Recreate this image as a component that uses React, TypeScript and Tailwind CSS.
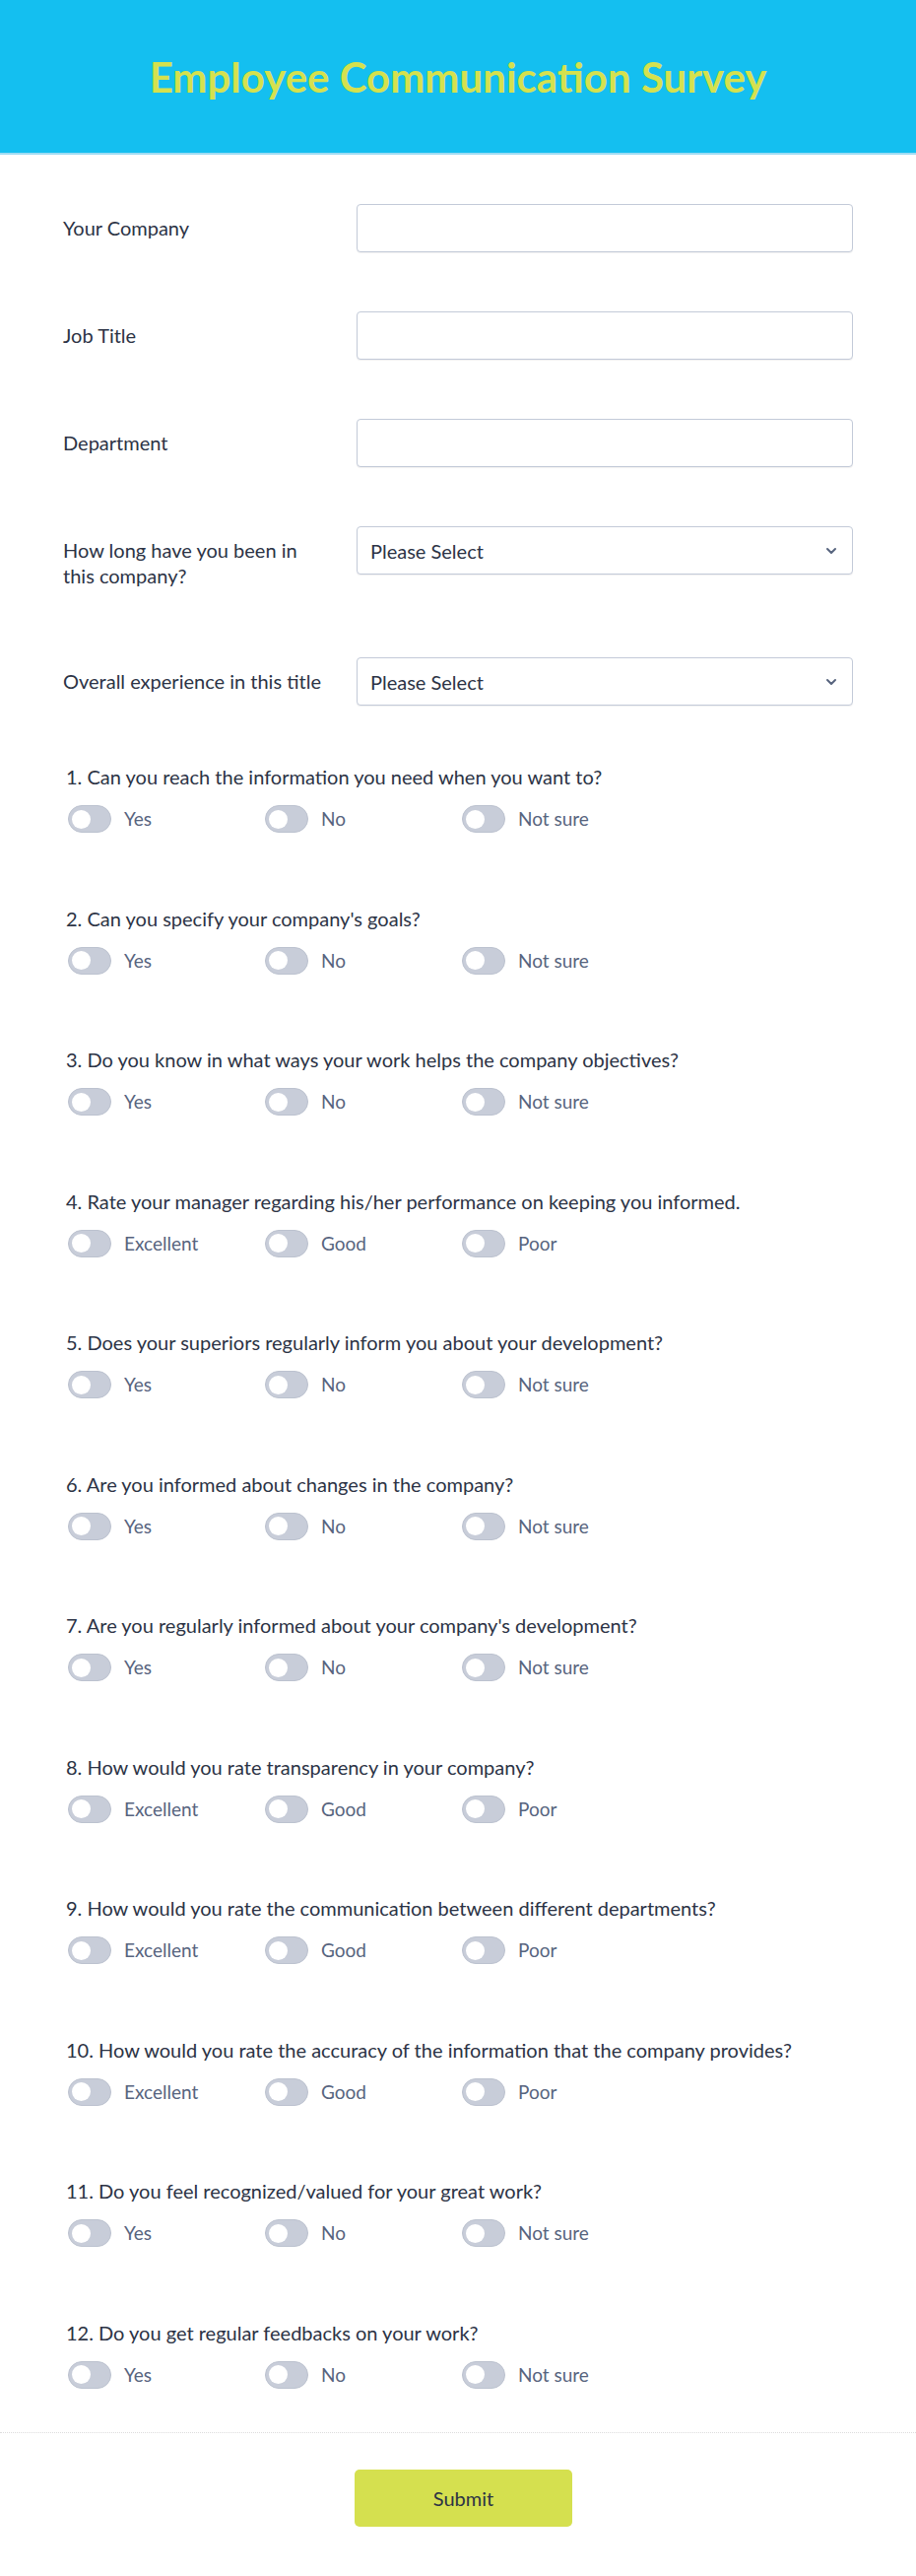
import React from 'react';

const fields = [
  { label: 'Your Company', type: 'text' },
  { label: 'Job Title', type: 'text' },
  { label: 'Department', type: 'text' },
  { label: 'How long have you been in this company?', type: 'select' },
  { label: 'Overall experience in this title', type: 'select' },
];

const yesNo = ['Yes', 'No', 'Not sure'];
const rating = ['Excellent', 'Good', 'Poor'];

const questions = [
  { text: '1. Can you reach the information you need when you want to?', options: yesNo },
  { text: "2. Can you specify your company's goals?", options: yesNo },
  { text: '3. Do you know in what ways your work helps the company objectives?', options: yesNo },
  { text: '4. Rate your manager regarding his/her performance on keeping you informed.', options: rating },
  { text: '5. Does your superiors regularly inform you about your development?', options: yesNo },
  { text: '6. Are you informed about changes in the company?', options: yesNo },
  { text: "7. Are you regularly informed about your company's development?", options: yesNo },
  { text: '8. How would you rate transparency in your company?', options: rating },
  { text: '9. How would you rate the communication between different departments?', options: rating },
  { text: '10. How would you rate the accuracy of the information that the company provides?', options: rating },
  { text: '11. Do you feel recognized/valued for your great work?', options: yesNo },
  { text: '12. Do you get regular feedbacks on your work?', options: yesNo },
];

function Toggle({ label }: { label: string }) {
  return (
    <label className="flex w-[200px] items-center gap-[13px]">
      <span className="flex h-[28px] w-[44px] shrink-0 items-center rounded-full border border-[#bcc2cf] bg-[#c8cdd9] px-[3px]">
        <span className="h-[19px] w-[19px] rounded-full bg-white" />
      </span>
      <span className="text-[19px] leading-[26px] text-[#57647e]">{label}</span>
    </label>
  );
}

export default function App() {
  return (
    <div className="min-h-[2614px] bg-white font-['Lato',sans-serif] text-[#2c3345]">
      <header className="flex h-[157px] items-center justify-center border-b-2 border-[#9fdcf3] bg-[#14bff0]">
        <h1 className="mt-[2px] text-[42px] font-bold text-[#d5e14e]">Employee Communication Survey</h1>
      </header>

      <div className="flex flex-col gap-[60px] px-[64px] pt-[50px]">
        {fields.map((f) => (
          <div key={f.label} className="flex items-start">
            <div className="w-[272px] pt-[11px] pb-[10px] text-[20px] leading-[26px]">{f.label}</div>
            <div className="ml-[26px] flex-1">
              {f.type === 'text' ? (
                <input
                  type="text"
                  className="h-[49px] w-full rounded-[4px] border border-[#c3cad8] bg-white px-[13px] shadow-[0_1px_1px_rgba(0,0,0,0.06)] outline-none"
                />
              ) : (
                <div className="flex h-[49px] w-full items-center justify-between rounded-[4px] border border-[#c3cad8] bg-white px-[13px] shadow-[0_1px_1px_rgba(0,0,0,0.06)]">
                  <span className="text-[20px] text-[#2c3345]">Please Select</span>
                  <svg width="12" height="8" viewBox="0 0 12 8" className="mr-[2px]">
                    <path d="M2 2 L6 6 L10 2" fill="none" stroke="#57647e" strokeWidth="2" strokeLinecap="round" strokeLinejoin="round" />
                  </svg>
                </div>
              )}
            </div>
          </div>
        ))}
      </div>

      <div className="mt-[59px] flex flex-col gap-[73.5px] px-[64px]">
        {questions.map((q) => (
          <div key={q.text} className="flex flex-col gap-[16px]">
            <div className="pl-[3px] text-[20px] leading-[26px]">{q.text}</div>
            <div className="flex pl-[5px]">
              {q.options.map((o) => (
                <Toggle key={o} label={o} />
              ))}
            </div>
          </div>
        ))}
      </div>

      <div className="mt-[44px] border-t border-dotted border-[#dcdcdc]" />

      <div className="flex justify-center pt-[37px] pb-[50px] pl-[11px]">
        <button className="h-[58px] w-[221px] rounded-[5px] bg-[#d5e04f] text-[20px] text-[#2c3345]">Submit</button>
      </div>
    </div>
  );
}
